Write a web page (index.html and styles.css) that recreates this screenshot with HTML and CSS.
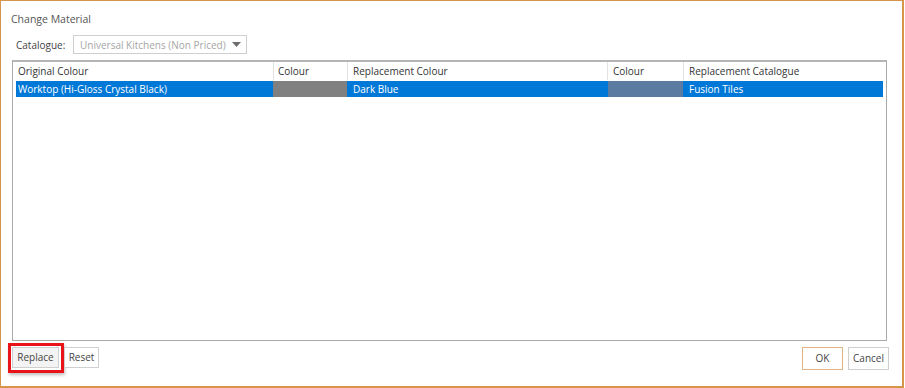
FILE: index.html
```html
<!DOCTYPE html>
<html>
<head>
<meta charset="utf-8">
<link rel="stylesheet" href="styles.css">
</head>
<body>
<div class="window">
  <div class="title">Change Material</div>
  <div class="cat-row">
    <span class="cat-label">Catalogue:</span>
    <div class="dropdown">
      <span class="dd-text">Universal Kitchens (Non Priced)</span>
      <svg class="dd-arrow" width="9" height="5" viewBox="0 0 9 5"><path d="M0 0 H9 L4.5 5 Z" fill="#6d6d6d"/></svg>
    </div>
  </div>
  <div class="grid">
    <div class="row head">
      <div class="c c1">Original Colour</div>
      <div class="c c2">Colour</div>
      <div class="c c3">Replacement Colour</div>
      <div class="c c4">Colour</div>
      <div class="c c5">Replacement Catalogue</div>
    </div>
    <div class="row sel">
      <div class="c c1">Worktop (Hi-Gloss Crystal Black)</div>
      <div class="c c2 sw-grey"></div>
      <div class="c c3">Dark Blue</div>
      <div class="c c4 sw-blue"></div>
      <div class="c c5">Fusion Tiles</div>
    </div>
  </div>
  <div class="footer">
    <div class="left">
      <div class="focus"><button class="btn replace">Replace</button></div>
      <button class="btn reset">Reset</button>
    </div>
    <div class="right">
      <button class="btn ok">OK</button>
      <button class="btn cancel">Cancel</button>
    </div>
  </div>
</div>
</body>
</html>
```
FILE: styles.css
```css
html, body {
  margin: 0;
  padding: 0;
  background: #ffffff;
}
body {
  font-family: "Open Sans", "Noto Sans", sans-serif;
  font-size: 10px;
  color: #333333;
}
.window {
  box-sizing: border-box;
  width: 904px;
  height: 388px;
  border-top: 1px solid #d5954a;
  border-left: 1px solid #d5954a;
  border-right: 2px solid #d5954a;
  border-bottom: 2px solid #d5954a;
  display: flex;
  flex-direction: column;
  padding: 0 13px 0 10px;
}
.title {
  margin-top: 10px;
  height: 16px;
  line-height: 16px;
  font-size: 10.5px;
  color: #555555;
}
.cat-row {
  display: flex;
  align-items: center;
  margin-top: 8px;
  height: 19px;
}
.cat-label {
  margin-left: 5px;
  width: 57px;
  color: #444444;
}
.dropdown {
  box-sizing: border-box;
  width: 174px;
  height: 19px;
  border: 1px solid #cfcfcf;
  display: flex;
  align-items: center;
  padding-left: 6px;
  padding-right: 5px;
}
.dd-text {
  flex: 1;
  min-width: 0;
  overflow: hidden;
  color: #a6a6a6;
  white-space: nowrap;
}
.dd-arrow {
  display: block;
  flex: none;
}
.grid {
  box-sizing: border-box;
  margin-top: 6px;
  margin-left: 1px;
  width: 875px;
  height: 281px;
  border: 1px solid #a9a9a9;
  border-top: 2px solid #b5b5b5;
  padding: 0 3px;
}
.row {
  display: flex;
  height: 18px;
  line-height: 18px;
}
.head .c {
  border-right: 1px solid #e3e3e3;
  color: #333333;
}
.head .c5 {
  border-right: none;
}
.c {
  box-sizing: border-box;
  padding-left: 4px;
  white-space: nowrap;
  overflow: hidden;
}
.head .c1 { width: 258px; padding-left: 2px; }
.head .c2 { width: 74px; }
.head .c3 { width: 260px; padding-left: 5px; }
.head .c4 { width: 76px; padding-left: 5px; }
.head .c5 { flex: 1; padding-left: 5px; }
.row.sel {
  margin-top: 1px;
  height: 16px;
  line-height: 16px;
  background: #0078d7;
  color: #ffffff;
}
.sel .c1 { width: 257px; padding-left: 2px; }
.sel .c2 { width: 74px; }
.sel .c3 { width: 261px; padding-left: 6px; }
.sel .c4 { width: 75px; }
.sel .c5 { flex: 1; padding-left: 6px; }
.sw-grey { background: #808080; }
.sw-blue { background: #5c7ba1; }
.footer {
  display: flex;
  justify-content: space-between;
  margin-top: 2px;
}
.left, .right {
  display: flex;
  align-items: flex-start;
}
.focus {
  box-sizing: border-box;
  border: 3px solid #e8141a;
  padding: 1px 2px 2px 1px;
  margin-left: -3px;
  box-shadow: 1px 2px 3px rgba(0,0,0,0.25);
}
.btn {
  box-sizing: border-box;
  font-family: "Open Sans", "Noto Sans", sans-serif;
  font-size: 10px;
  color: #444444;
  background: #ffffff;
  border: 1px solid #d0d0d0;
  height: 21px;
  padding: 0;
  margin: 0;
  line-height: 19px;
}
.replace {
  width: 47px;
  background: #f3f3f3;
  border-color: #cfcfcf;
}
.reset {
  width: 35px;
  margin-top: 4px;
}
.right {
  margin-top: 4px;
}
.ok {
  width: 41px;
  height: 23px;
  border-color: #e2b383;
  margin-right: 5px;
}
.cancel {
  width: 41px;
  height: 23px;
  border-color: #cfcfcf;
}
```
